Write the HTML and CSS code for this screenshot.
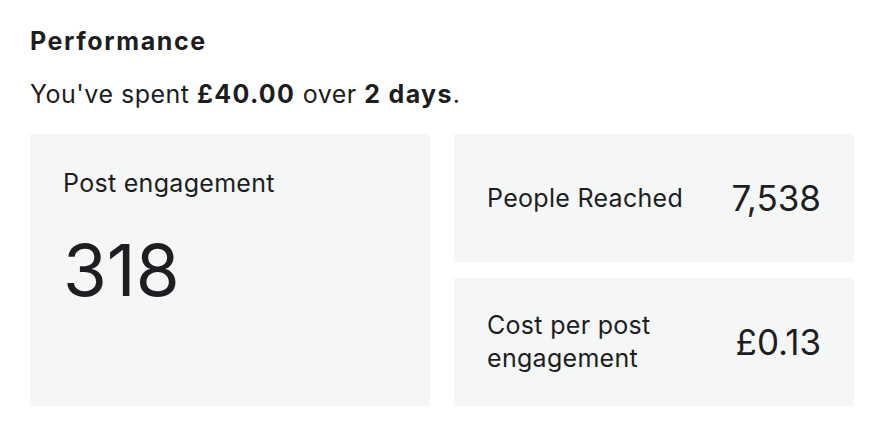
FILE: index.html
```html
<!DOCTYPE html>
<html lang="en">
<head>
    <meta charset="UTF-8">
    <title>Performance</title>
    <link rel="stylesheet" href="styles.css">
</head>
<body>
    <section class="performance">
        <h2 class="title">Performance</h2>
        <p class="summary">You've spent <b>£40.00</b> over <b>2 days</b>.</p>

        <div class="stats">
            <div class="stat stat-main">
                <div class="stat-label">Post engagement</div>
                <div class="stat-value">318</div>
            </div>
            <div class="stat-side">
                <div class="stat stat-row">
                    <div class="stat-label">People Reached</div>
                    <div class="stat-value">7,538</div>
                </div>
                <div class="stat stat-row">
                    <div class="stat-label">Cost per post<br>engagement</div>
                    <div class="stat-value">£0.13</div>
                </div>
            </div>
        </div>
    </section>
</body>
</html>
```

FILE: styles.css
```css
* {
    margin: 0;
    padding: 0;
    box-sizing: border-box;
}

body {
    font-family: Inter, 'Noto Sans', sans-serif;
    background-color: #fff;
    color: #1c1e21;
}

.performance {
    padding: 26px 30px;
}

.title {
    font-size: 25px;
    font-weight: 700;
    line-height: 30px;
    letter-spacing: 1.6px;
}

.summary {
    font-size: 25px;
    line-height: 30px;
    letter-spacing: 0.5px;
    margin-top: 23px;
}

.summary b {
    font-weight: 700;
    letter-spacing: 1.3px;
}

.stats {
    display: grid;
    grid-template-columns: 400px 400px;
    gap: 24px;
    margin-top: 25px;
}

.stat {
    background-color: #f5f6f6;
}

.stat-label {
    font-size: 25px;
    line-height: 33px;
    letter-spacing: 0.3px;
}

/* big tile on the left */
.stat-main {
    height: 272px;
    padding: 33px 33px;
}

.stat-main .stat-value {
    font-size: 71px;
    line-height: 88px;
    margin-top: 26px;
}

/* two stacked tiles on the right */
.stat-side {
    display: flex;
    flex-direction: column;
    gap: 16px;
}

.stat-row {
    height: 128px;
    padding: 0 33px;
    display: flex;
    align-items: center;
    justify-content: space-between;
}

.stat-row .stat-value {
    font-size: 35px;
    line-height: 42px;
}
```
